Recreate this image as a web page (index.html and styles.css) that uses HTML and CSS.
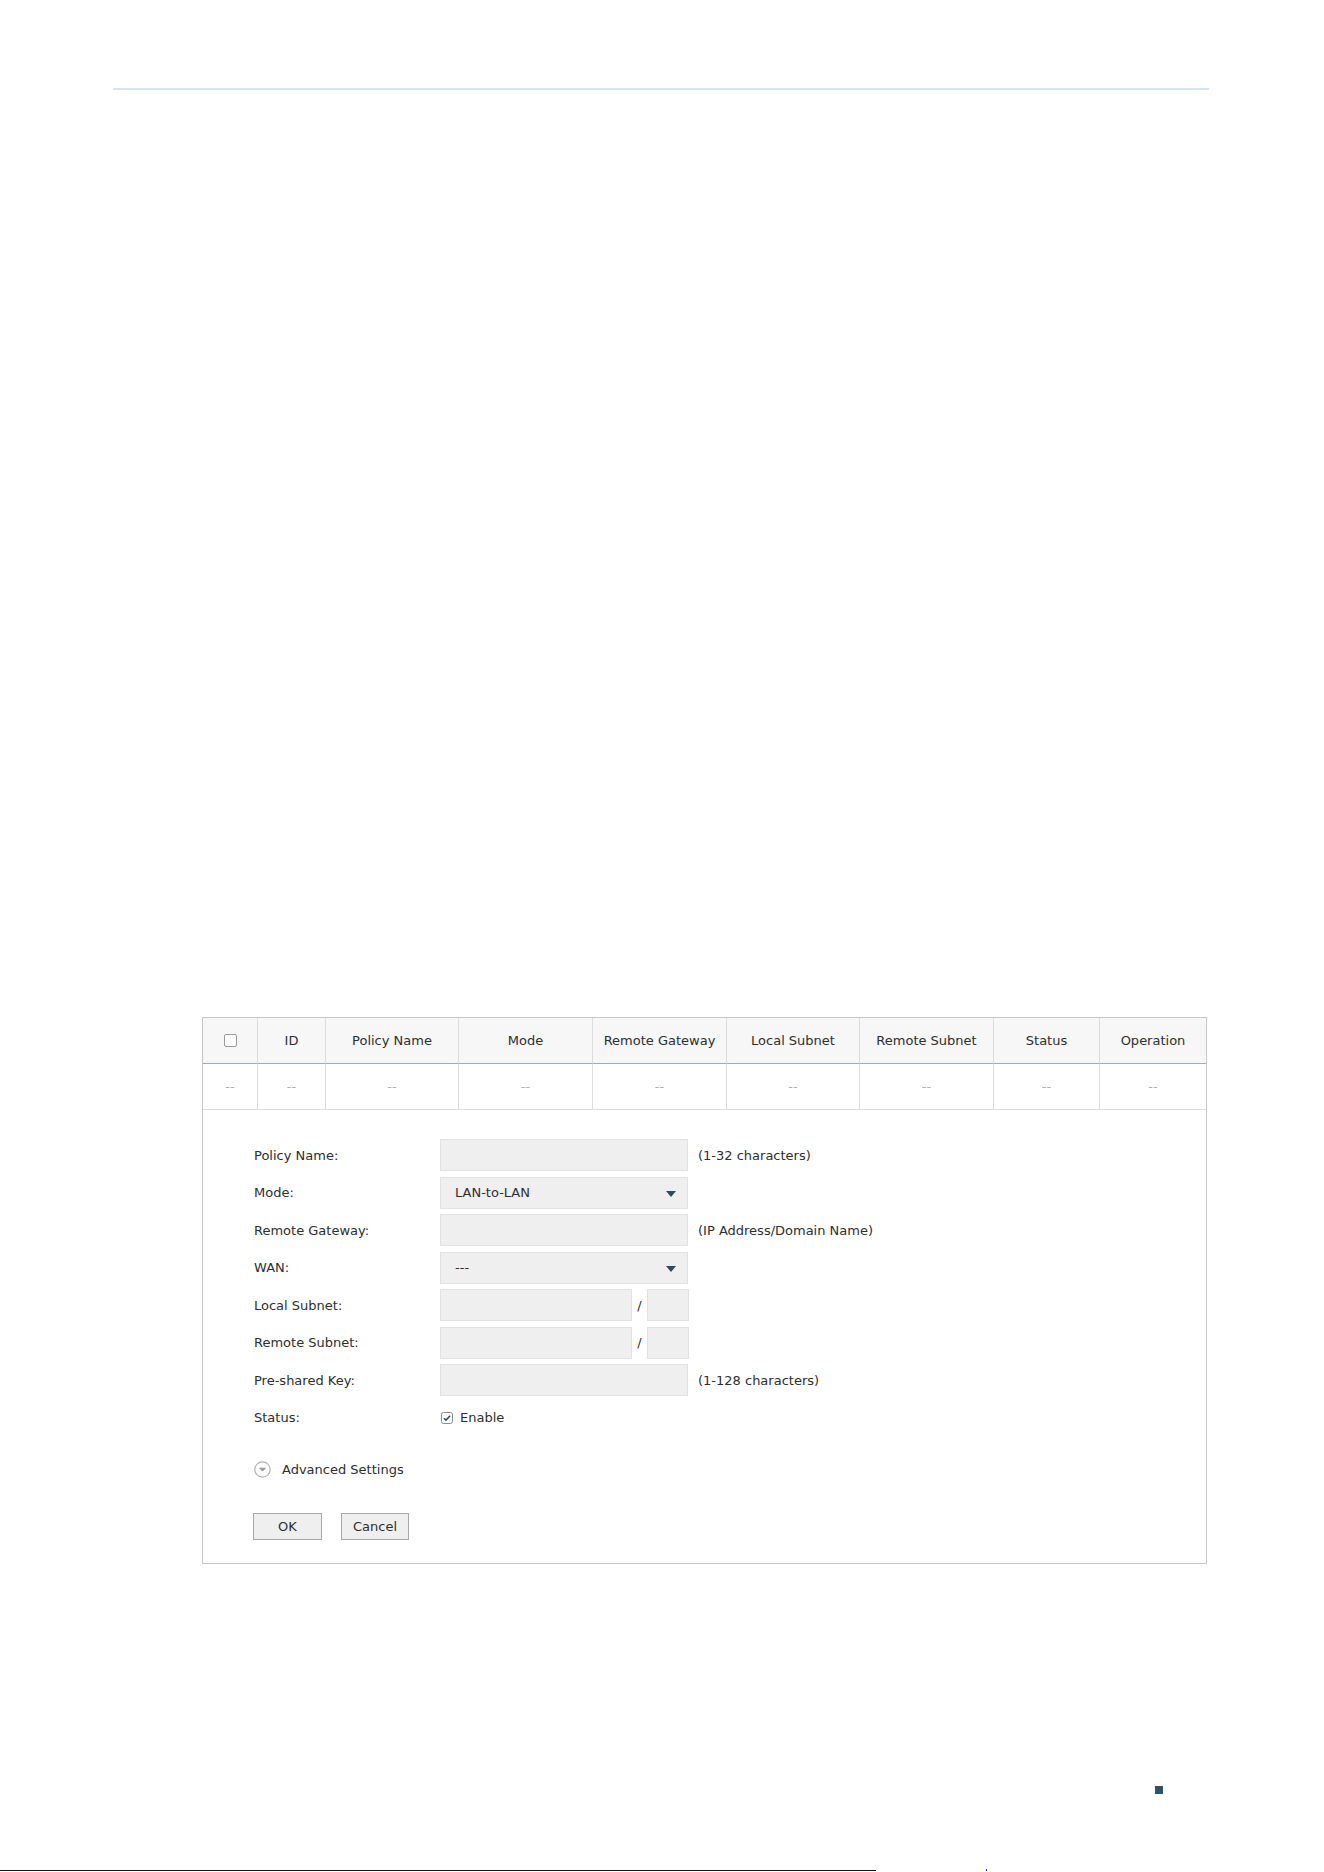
FILE: index.html
```html
<!DOCTYPE html>
<html lang="en">
<head>
<meta charset="utf-8">
<title>IPsec Policy</title>
<link rel="stylesheet" href="styles.css">
</head>
<body>
<div class="page">
  <div class="rule"></div>

  <section class="panel">
    <div class="grid">
      <div class="cell head"><span class="box"></span></div>
      <div class="cell head">ID</div>
      <div class="cell head">Policy Name</div>
      <div class="cell head">Mode</div>
      <div class="cell head">Remote Gateway</div>
      <div class="cell head">Local Subnet</div>
      <div class="cell head">Remote Subnet</div>
      <div class="cell head">Status</div>
      <div class="cell head">Operation</div>

      <div class="cell empty">--</div>
      <div class="cell empty">--</div>
      <div class="cell empty">--</div>
      <div class="cell empty">--</div>
      <div class="cell empty">--</div>
      <div class="cell empty">--</div>
      <div class="cell empty">--</div>
      <div class="cell empty">--</div>
      <div class="cell empty">--</div>
    </div>

    <form class="form">
      <div class="row">
        <label class="label">Policy Name:</label>
        <span class="field"></span>
        <span class="hint">(1-32 characters)</span>
      </div>
      <div class="row">
        <label class="label">Mode:</label>
        <span class="field select">LAN-to-LAN<span class="caret"></span></span>
      </div>
      <div class="row">
        <label class="label">Remote Gateway:</label>
        <span class="field"></span>
        <span class="hint">(IP Address/Domain Name)</span>
      </div>
      <div class="row">
        <label class="label">WAN:</label>
        <span class="field select">---<span class="caret"></span></span>
      </div>
      <div class="row">
        <label class="label">Local Subnet:</label>
        <span class="field ip"></span>
        <span class="slash">/</span>
        <span class="field mask"></span>
      </div>
      <div class="row">
        <label class="label">Remote Subnet:</label>
        <span class="field ip"></span>
        <span class="slash">/</span>
        <span class="field mask"></span>
      </div>
      <div class="row">
        <label class="label">Pre-shared Key:</label>
        <span class="field"></span>
        <span class="hint">(1-128 characters)</span>
      </div>
      <div class="row">
        <label class="label">Status:</label>
        <span class="check">
          <svg width="12" height="12" viewBox="0 0 12 12"><rect x="0.5" y="0.5" width="11" height="11" rx="2" fill="#fff" stroke="#8a8a8a"/><path d="M3 6.2 L5 8.2 L9 3.8" fill="none" stroke="#2b4658" stroke-width="1.6"/></svg>
        </span>
        <span class="enable">Enable</span>
      </div>

      <div class="advanced">
        <svg class="adv-icon" width="17" height="17" viewBox="0 0 17 17"><circle cx="8.5" cy="8.5" r="7.7" fill="#fff" stroke="#b4b4b4" stroke-width="1.2"/><path d="M5.6 7.2 L8.5 10.1 L11.4 7.2 Z" fill="#9a9a9a" stroke="#9a9a9a" stroke-width="1" stroke-linejoin="round"/></svg>
        <span>Advanced Settings</span>
      </div>

      <div class="actions">
        <button type="button" class="btn ok">OK</button>
        <button type="button" class="btn cancel">Cancel</button>
      </div>
    </form>
  </section>

  <footer class="foot"><span class="mark"></span></footer>
  <div class="edge"><span class="line"></span><span class="tick"></span></div>
</div>
</body>
</html>
```

FILE: styles.css
```css
html, body {
  margin: 0;
  padding: 0;
  background: #fff;
}

body {
  font-family: "DejaVu Sans", "Liberation Sans", sans-serif;
  font-size: 13px;
  color: #2e2e2e;
}

.page {
  width: 1324px;
  height: 1872px;
  overflow: hidden;
}

.rule {
  margin: 88px 0 0 113px;
  width: 1096px;
  height: 2px;
  background: #d8e5e9;
}

/* policy panel */
.panel {
  margin: 927px 0 0 202px;
  width: 1003px;
  border: 1px solid #c6c6c6;
}

.grid {
  display: grid;
  grid-template-columns: 55px 68px 133px 134px 134px 133px 134px 106px 106px;
}

.cell {
  display: flex;
  align-items: center;
  justify-content: center;
  border-right: 1px solid #dcdcdc;
  box-sizing: border-box;
}

.cell:nth-child(9n) {
  border-right: 0;
}

.head {
  height: 46px;
  background: #f7f7f7;
  border-bottom: 1px solid #8fb0c8;
}

.empty {
  height: 46px;
  border-bottom: 1px solid #dcdcdc;
  color: #b0b0b0;
}

.box {
  width: 11px;
  height: 11px;
  border: 1px solid #9a9a9a;
  border-radius: 2px;
  background: #fff;
}

/* form */
.form {
  padding: 29px 0 23px 51px;
}

.row {
  display: flex;
  align-items: center;
  height: 32px;
  margin-bottom: 5.5px;
}

.label {
  width: 186px;
  flex: none;
}

.field {
  box-sizing: border-box;
  width: 248px;
  height: 32px;
  background: #f0eff0;
  border: 1px solid #e2e2e2;
  display: flex;
  align-items: center;
  position: relative;
  flex: none;
}

.select {
  padding-left: 14px;
}

.caret {
  position: absolute;
  right: 11px;
  top: 13px;
  width: 0;
  height: 0;
  border-left: 5px solid transparent;
  border-right: 5px solid transparent;
  border-top: 6px solid #2b4a5c;
}

.field.ip {
  width: 192px;
}

.field.mask {
  width: 42px;
}

.slash {
  width: 15px;
  text-align: center;
  flex: none;
}

.hint {
  margin-left: 10px;
}

.check {
  display: flex;
  width: 12px;
  height: 12px;
  margin-left: 1px;
}

.enable {
  margin-left: 7px;
}

/* margin collapses with the last row's 5.5px */
.advanced {
  display: flex;
  align-items: center;
  height: 17px;
  margin-top: 27.5px;
}

.adv-icon {
  margin-right: 11px;
}

.actions {
  display: flex;
  gap: 19px;
  margin-top: 34.5px;
}

.btn {
  box-sizing: border-box;
  height: 27px;
  background: #efefef;
  border: 1px solid #a8a8a8;
  font-family: inherit;
  font-size: 13px;
  color: #2e2e2e;
  padding: 0;
}

.btn.ok {
  width: 69px;
  margin-left: -1px;
}

.btn.cancel {
  width: 68px;
}

/* page footer */
.foot {
  margin: 222.5px 0 0 1155px;
  height: 8px;
}

.mark {
  display: block;
  width: 8px;
  height: 8px;
  background: #2e5266;
}

.edge {
  margin-top: 75px;
  display: flex;
  align-items: flex-end;
  height: 2px;
}

.line {
  width: 876px;
  height: 1px;
  background: #111;
}

.tick {
  margin-left: 110px;
  width: 1px;
  height: 2px;
  background: #3a35c8;
}
```
